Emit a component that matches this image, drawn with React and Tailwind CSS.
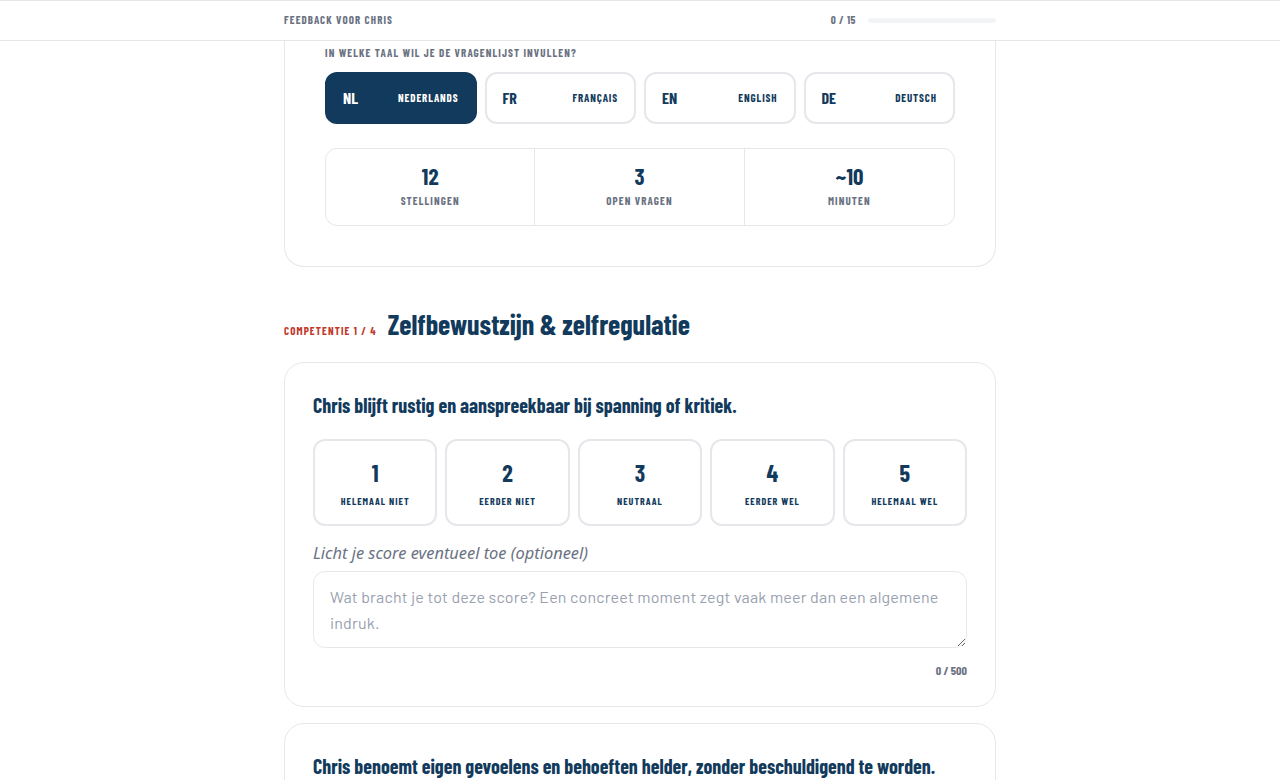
const languages = [
  { code: 'NL', name: 'Nederlands', active: true },
  { code: 'FR', name: 'Français' },
  { code: 'EN', name: 'English' },
  { code: 'DE', name: 'Deutsch' },
];

const facts = [
  { value: '12', label: 'Stellingen' },
  { value: '3', label: 'Open vragen' },
  { value: '~10', label: 'Minuten' },
];

const scale = [
  { value: 1, label: 'Helemaal niet' },
  { value: 2, label: 'Eerder niet' },
  { value: 3, label: 'Neutraal' },
  { value: 4, label: 'Eerder wel' },
  { value: 5, label: 'Helemaal wel' },
];

function Statement({ text, last }) {
  return (
    <div className="rounded-[20px] border border-gray-200 bg-white px-7 pt-[28px] pb-7">
      <h3 className="text-[20px] leading-[28px] font-bold text-[#123a5c]">{text}</h3>
      {!last && (
        <>
          <div className="mt-[20px] grid grid-cols-5 gap-2">
            {scale.map((s) => (
              <button
                key={s.value}
                className="flex h-[87px] flex-col items-center justify-center rounded-[12px] border-2 border-gray-200 bg-white text-[#123a5c]"
              >
                <span className="text-[24px] leading-[28px] font-bold">{s.value}</span>
                <span className="mt-[8px] text-[10px] leading-[12px] font-bold uppercase tracking-[0.1em]">
                  {s.label}
                </span>
              </button>
            ))}
          </div>
          <p className="mt-4 mb-[7px] font-['Noto_Sans',sans-serif] text-[16.4px] leading-[22px] italic text-gray-500">
            Licht je score eventueel toe (optioneel)
          </p>
          <textarea
            rows={2}
            className="block h-[77px] w-full resize-y rounded-[12px] border border-gray-200 px-4 py-3 font-['Barlow','Barlow_Condensed',sans-serif] text-[16px] leading-[26px] tracking-[0.012em] text-gray-700 placeholder:text-gray-400 focus:outline-none"
            placeholder="Wat bracht je tot deze score? Een concreet moment zegt vaak meer dan een algemene indruk."
          />
          <div className="mt-[14px] text-right text-[12px] leading-[16px] font-bold text-gray-500">0 / 500</div>
        </>
      )}
    </div>
  );
}

export default function App() {
  return (
    <div className="min-h-screen bg-white font-['Barlow_Condensed',sans-serif]">
      {/* Header */}
      <header className="sticky top-0 z-10 h-[41px] border-t border-b border-gray-200 bg-white">
        <div className="mx-auto flex h-full w-[712px] items-center justify-between">
          <span className="text-[11px] font-bold uppercase tracking-[0.1em] text-gray-500">Feedback voor Chris</span>
          <div className="flex items-center gap-3">
            <span className="text-[11px] font-bold tracking-[0.05em] text-gray-500">0 / 15</span>
            <div className="h-[5px] w-[128px] rounded-full bg-gray-100" />
          </div>
        </div>
      </header>

      <main className="mx-auto w-[712px]">
        {/* Intro card */}
        <section className="rounded-b-[20px] border-x border-b border-gray-200 px-10 pt-[5px] pb-10">
          <p className="mb-3 text-[11px] leading-[14px] font-bold uppercase tracking-[0.1em] text-gray-500">
            In welke taal wil je de vragenlijst invullen?
          </p>
          <div className="grid grid-cols-4 gap-2">
            {languages.map((l) => (
              <button
                key={l.code}
                className={
                  l.active
                    ? 'flex h-[52px] items-center justify-between rounded-[12px] border-2 border-[#123a5c] bg-[#123a5c] px-4 pr-[16px] text-white'
                    : 'flex h-[52px] items-center justify-between rounded-[12px] border-2 border-gray-200 bg-white px-4 pr-[16px] text-[#123a5c]'
                }
              >
                <span className="text-[16px] font-bold">{l.code}</span>
                <span className="text-[11px] font-bold uppercase tracking-[0.08em]">{l.name}</span>
              </button>
            ))}
          </div>
          <div className="mt-6 grid h-[78px] grid-cols-3 divide-x divide-gray-200 rounded-[12px] border border-gray-200">
            {facts.map((f) => (
              <div key={f.label} className="flex flex-col items-center pt-[15px]">
                <span className="text-[23px] leading-[24px] font-bold text-[#123a5c]">{f.value}</span>
                <span className="mt-[6px] text-[11px] leading-[14px] font-bold uppercase tracking-[0.1em] text-gray-500">
                  {f.label}
                </span>
              </div>
            ))}
          </div>
        </section>

        {/* Competence heading */}
        <div className="mt-[40px] mb-[21px] flex items-baseline gap-[11px]">
          <span className="text-[11px] font-bold uppercase tracking-[0.1em] text-[#c0392b]">Competentie 1 / 4</span>
          <h2 className="text-[28px] leading-[34px] font-bold text-[#123a5c]">Zelfbewustzijn &amp; zelfregulatie</h2>
        </div>

        <div className="flex flex-col gap-4">
          <Statement text="Chris blijft rustig en aanspreekbaar bij spanning of kritiek." />
          <Statement text="Chris benoemt eigen gevoelens en behoeften helder, zonder beschuldigend te worden." />
        </div>
      </main>
    </div>
  );
}
